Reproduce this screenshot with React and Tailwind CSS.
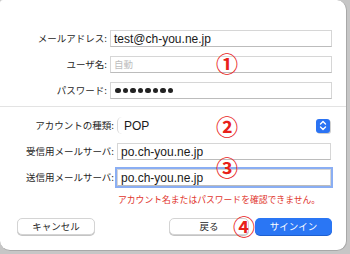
import React from 'react';

const jp = { fontFamily: '"Noto Sans CJK JP", "Noto Sans", sans-serif' };
const lat = { fontFamily: '"Liberation Sans", "Noto Sans CJK JP", sans-serif' };

const Label = ({ w, children }) => (
    <div className={`${w} shrink-0 text-right text-[9.5px] text-[#262626] pr-[3px] leading-none`} style={jp}>
        {children}
    </div>
);

const Field = ({ w, children, focused }) => (
    <div
        className={`${w} h-[17px] flex items-center px-[3px] bg-white border border-[#d6d6d6] border-b-[#bcbcbc] ${focused ? 'shadow-[0_0_0_2px_#8aaef3] border-[#7d9fe6]' : ''}`}
    >
        {children}
    </div>
);

const Mark = ({ n, className }) => (
    <span className={`absolute text-[22px] font-bold text-[#e8201a] leading-none ${className}`} style={jp}>
        {n}
    </span>
);

export default function App() {
    return (
        <div className="w-[350px] h-[254px] bg-[#c6c6c6] overflow-hidden">
            <div className="relative w-[347px] h-[251px] bg-white rounded-[10px] rounded-tl-[3px] border-r border-b border-[#a8a8a8] flex flex-col">
                {/* account */}
                <div className="flex flex-col gap-[9px] pt-[30px]">
                    <div className="flex items-center">
                        <Label w="w-[110px]">メールアドレス:</Label>
                        <Field w="w-[222px]">
                            <span className="text-[12px] text-[#1a1a1a]" style={lat}>test@ch-you.ne.jp</span>
                        </Field>
                    </div>
                    <div className="flex items-center">
                        <Label w="w-[110px]">ユーザ名:</Label>
                        <Field w="w-[222px]">
                            <span className="text-[9.5px] text-[#bdbdbd]" style={jp}>自動</span>
                        </Field>
                    </div>
                    <div className="flex items-center">
                        <Label w="w-[110px]">パスワード:</Label>
                        <Field w="w-[222px]">
                            <div className="flex gap-[2px] pl-[1px]">
                                {[0, 1, 2, 3, 4, 5, 6, 7].map((i) => (
                                    <span key={i} className="w-[5.5px] h-[5.5px] rounded-full bg-[#222]" />
                                ))}
                            </div>
                        </Field>
                    </div>
                </div>

                <div className="mt-[7px] border-t border-[#e3e3e3]" />

                {/* servers */}
                <div className="flex flex-col gap-[9px] pt-[10px]">
                    <div className="flex items-center">
                        <Label w="w-[117px]">アカウントの種類:</Label>
                        <div className="w-[214px] h-[17px] flex items-center justify-between rounded-[5px] border-l border-[#d9d9d9] pl-[6px] pr-[1px]">
                            <span className="text-[12px] text-[#1a1a1a]" style={lat}>POP</span>
                            <span className="w-[14px] h-[14px] rounded-[3px] bg-[#2b73f3] flex items-center justify-center shadow-[1px_1px_0_#d0d0d0]">
                                <svg width="8" height="11" viewBox="0 0 8 11" fill="none" stroke="white" strokeWidth="1.4" strokeLinecap="round" strokeLinejoin="round">
                                    <path d="M1.5 4 L4 1.5 L6.5 4" />
                                    <path d="M1.5 7 L4 9.5 L6.5 7" />
                                </svg>
                            </span>
                        </div>
                    </div>
                    <div className="flex items-center">
                        <Label w="w-[117px]">受信用メールサーバ:</Label>
                        <Field w="w-[214px]">
                            <span className="text-[12px] text-[#1a1a1a]" style={lat}>po.ch-you.ne.jp</span>
                        </Field>
                    </div>
                    <div className="flex items-center">
                        <Label w="w-[117px]">送信用メールサーバ:</Label>
                        <Field w="w-[214px]" focused>
                            <span className="text-[12px] text-[#1a1a1a]" style={lat}>po.ch-you.ne.jp</span>
                        </Field>
                    </div>
                </div>

                <div className="pl-[118px] pt-[10px] text-[8.8px] text-[#e1352c] leading-none" style={jp}>
                    アカウント名またはパスワードを確認できません。
                </div>

                {/* buttons */}
                <div className="flex items-center pt-[13px] pl-[17px]">
                    <button className="w-[78px] h-[17px] rounded-[5px] bg-white border border-[#d4d4d4] shadow-[0_1px_0_#c4c4c4] text-[9.5px] text-[#262626] leading-none" style={jp}>
                        キャンセル
                    </button>
                    <button className="ml-[74px] w-[80px] h-[17px] rounded-[5px] bg-white border border-[#d4d4d4] shadow-[0_1px_0_#c4c4c4] text-[9.5px] text-[#262626] leading-none" style={jp}>
                        戻る
                    </button>
                    <button className="ml-[6px] w-[77px] h-[17px] rounded-[5px] bg-[#2a76f4] text-[9.5px] text-white leading-none shadow-[0_1px_0_#1e5fd0]" style={jp}>
                        サインイン
                    </button>
                </div>

                <Mark n="①" className="left-[216px] top-[51px]" />
                <Mark n="②" className="left-[216px] top-[114px]" />
                <Mark n="③" className="left-[216px] top-[155px]" />
                <Mark n="④" className="left-[233px] top-[214px]" />
            </div>
        </div>
    );
}
